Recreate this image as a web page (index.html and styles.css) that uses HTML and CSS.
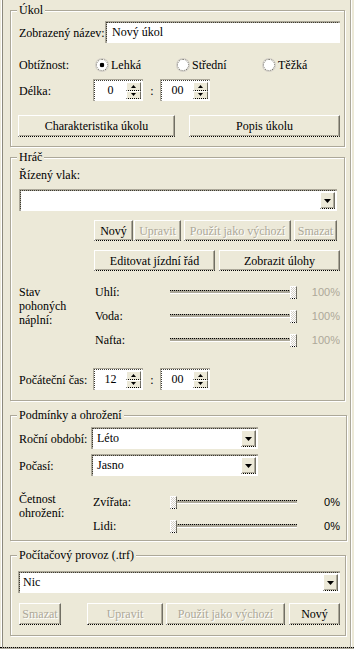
FILE: index.html
```html
<!DOCTYPE html>
<html lang="cs">
<head>
<meta charset="utf-8">
<title>Úkol</title>
<link rel="stylesheet" href="styles.css">
</head>
<body>
<div class="window">

  <section class="group g1">
    <div class="title"><span>Úkol</span></div>
    <div class="row r-name">
      <span class="lbl w87">Zobrazený název:</span>
      <div class="field name-field">Nový úkol</div>
    </div>
    <div class="row r-diff">
      <span class="lbl w77">Obtížnost:</span>
      <span class="radio-item ri1"><span class="radio checked"></span>Lehká</span>
      <span class="radio-item ri2"><span class="radio"></span>Střední</span>
      <span class="radio-item"><span class="radio"></span>Těžká</span>
    </div>
    <div class="row r-len">
      <span class="lbl w75">Délka:</span>
      <div class="spin"><span class="spin-val">0</span><span class="spin-btns"><span class="sb"><svg width="5" height="3" viewBox="0 0 5 3"><polygon points="2.5,0 5,3 0,3"/></svg></span><span class="sb"><svg width="5" height="3" viewBox="0 0 5 3"><polygon points="0,0 5,0 2.5,3"/></svg></span></span></div>
      <span class="colon">:</span>
      <div class="spin"><span class="spin-val">00</span><span class="spin-btns"><span class="sb"><svg width="5" height="3" viewBox="0 0 5 3"><polygon points="2.5,0 5,3 0,3"/></svg></span><span class="sb"><svg width="5" height="3" viewBox="0 0 5 3"><polygon points="0,0 5,0 2.5,3"/></svg></span></span></div>
    </div>
    <div class="row r-btns1">
      <button class="btn b-char">Charakteristika úkolu</button>
      <button class="btn b-popis">Popis úkolu</button>
    </div>
  </section>

  <section class="group g2">
    <div class="title"><span>Hráč</span></div>
    <div class="lbl r-train">Řízený vlak:</div>
    <div class="field combo combo-train"><span class="combo-text"></span><span class="combo-btn"><svg width="7" height="4" viewBox="0 0 7 4"><polygon points="0,0 7,0 3.5,4"/></svg></span></div>
    <div class="row r-tbtn1">
      <button class="btn b-new">Nový</button>
      <button class="btn b-edit" disabled>Upravit</button>
      <button class="btn b-def" disabled>Použít jako výchozí</button>
      <button class="btn b-del" disabled>Smazat</button>
    </div>
    <div class="row r-tbtn2">
      <button class="btn b-sched">Editovat jízdní řád</button>
      <button class="btn b-tasks">Zobrazit úlohy</button>
    </div>
    <div class="fuel">
      <div class="side-lbl fuel-lbl">Stav<br>pohoných<br>náplní:</div>
      <span class="lbl">Uhlí:</span>
      <div class="track full"><span class="thumb"></span></div>
      <span class="pct off">100%</span>
      <span class="lbl">Voda:</span>
      <div class="track full"><span class="thumb"></span></div>
      <span class="pct off">100%</span>
      <span class="lbl">Nafta:</span>
      <div class="track full"><span class="thumb"></span></div>
      <span class="pct off">100%</span>
    </div>
    <div class="row r-start">
      <span class="lbl w75">Počáteční čas:</span>
      <div class="spin"><span class="spin-val">12</span><span class="spin-btns"><span class="sb"><svg width="5" height="3" viewBox="0 0 5 3"><polygon points="2.5,0 5,3 0,3"/></svg></span><span class="sb"><svg width="5" height="3" viewBox="0 0 5 3"><polygon points="0,0 5,0 2.5,3"/></svg></span></span></div>
      <span class="colon">:</span>
      <div class="spin"><span class="spin-val">00</span><span class="spin-btns"><span class="sb"><svg width="5" height="3" viewBox="0 0 5 3"><polygon points="2.5,0 5,3 0,3"/></svg></span><span class="sb"><svg width="5" height="3" viewBox="0 0 5 3"><polygon points="0,0 5,0 2.5,3"/></svg></span></span></div>
    </div>
  </section>

  <section class="group g3">
    <div class="title"><span>Podmínky a ohrožení</span></div>
    <div class="row r-season">
      <span class="lbl w73">Roční období:</span>
      <div class="field combo combo-small"><span class="combo-text">Léto</span><span class="combo-btn"><svg width="7" height="4" viewBox="0 0 7 4"><polygon points="0,0 7,0 3.5,4"/></svg></span></div>
    </div>
    <div class="row r-weather">
      <span class="lbl w73">Počasí:</span>
      <div class="field combo combo-small"><span class="combo-text">Jasno</span><span class="combo-btn"><svg width="7" height="4" viewBox="0 0 7 4"><polygon points="0,0 7,0 3.5,4"/></svg></span></div>
    </div>
    <div class="threat">
      <div class="side-lbl threat-lbl">Četnost<br>ohrožení:</div>
      <span class="lbl">Zvířata:</span>
      <div class="track"><span class="thumb"></span></div>
      <span class="pct">0%</span>
      <span class="lbl">Lidi:</span>
      <div class="track"><span class="thumb"></span></div>
      <span class="pct">0%</span>
    </div>
  </section>

  <section class="group g4">
    <div class="title"><span>Počítačový provoz (.trf)</span></div>
    <div class="field combo combo-ai"><span class="combo-text">Nic</span><span class="combo-btn"><svg width="7" height="4" viewBox="0 0 7 4"><polygon points="0,0 7,0 3.5,4"/></svg></span></div>
    <div class="row r-aibtn">
      <button class="btn a-del" disabled>Smazat</button>
      <button class="btn a-edit" disabled>Upravit</button>
      <button class="btn a-def" disabled>Použít jako výchozí</button>
      <button class="btn a-new">Nový</button>
    </div>
  </section>

  <div class="bottom-line"></div>
</div>
</body>
</html>
```

FILE: styles.css
```css
* { box-sizing: border-box; }

body {
  margin: 0;
  background: #ECE9D8;
  font: 12px/14px "Liberation Serif", "Times New Roman", serif;
  color: #000;
}

.window {
  width: 354px;
  height: 649px;
  overflow: hidden;
  display: flex;
  flex-direction: column;
  background: #ECE9D8;
  box-shadow:
    inset 1px 0 #ECE9D8,
    inset 2px 0 #fff,
    inset 3px 0 #8C897C,
    inset -2px 0 #ECE9D8,
    inset -3px 0 #fff,
    inset -4px 0 #ACA899;
}

/* group box */
.group {
  margin: 0 9px 0 10px;
  border: 1px solid #ACA899;
  box-shadow: inset 1px 1px #fff, 1px 1px #fff;
  padding: 0 4px 0 8px;
  flex: none;
}
.title {
  height: 14px;
  margin-top: -8px;
  white-space: nowrap;
}
.title span {
  display: inline-block;
  background: #ECE9D8;
  padding: 0 2px;
  margin-left: -2px;
}

.g1 { margin-top: 10px; padding-bottom: 9px; }
.g2 { margin-top: 10px; padding-bottom: 10px; }
.g3 { margin-top: 14px; padding-bottom: 2px; margin-right: 7px; }
.g4 { margin-top: 14px; padding-bottom: 10px; margin-right: 8px; }

.row { display: flex; align-items: center; }
.lbl { white-space: nowrap; flex: none; }
.w87 { width: 87px; }
.w77 { width: 77px; }
.w75 { width: 75px; }
.w73 { width: 73px; }

/* sunken fields */
.field {
  background: #fff;
  background-clip: padding-box;
  border-top: 1px dotted #3C3A32;
  border-left: 1px dotted #3C3A32;
  border-right: 1px solid #fff;
  border-bottom: 1px solid #fff;
  box-shadow: 0 -1px 0 #ACA899, -1px 0 0 #ACA899, -1px -1px 0 #ACA899;
}

.r-name { margin-top: 5px; height: 21px; }
.name-field {
  width: 234px;
  height: 21px;
  padding-left: 5px;
  line-height: 19px;
}

/* radios */
.r-diff { margin-top: 14px; height: 16px; }
.radio-item { display: flex; align-items: center; flex: none; white-space: nowrap; }
.ri1 { width: 81px; }
.ri2 { width: 86px; }
.radio {
  width: 12px;
  height: 12px;
  margin-right: 3px;
  border-radius: 50%;
  background: #fff;
  border: 1px dotted #716F64;
  box-shadow: 0 0 0 1px #D4D0C8;
  flex: none;
}
.radio.checked {
  background: radial-gradient(circle, #000 0 2px, #fff 2.6px);
}

/* spin */
.r-len { margin-top: 7px; height: 21px; }
.spin {
  display: flex;
  width: 49px;
  height: 21px;
  background: #fff;
  border-top: 1px dotted #3C3A32;
  border-left: 1px dotted #3C3A32;
  border-right: 1px solid #fff;
  border-bottom: 1px solid #fff;
  box-shadow: 0 -1px 0 #ACA899, -1px 0 0 #ACA899, -1px -1px 0 #ACA899;
  flex: none;
}
.spin-val {
  flex: 1;
  text-align: center;
  line-height: 19px;
}
.spin-btns {
  width: 15px;
  display: flex;
  flex-direction: column;
  flex: none;
  margin: 1px 1px 1px 0;
}
.sb {
  flex: 1;
  background: #ECE9D8;
  border-top: 1px solid #fff;
  border-left: 1px solid #fff;
  border-right: 1px solid #716F64;
  border-bottom: 1px dotted #000;
  display: flex;
  align-items: center;
  justify-content: center;
}
.sb svg { display: block; fill: #000; }
.colon {
  width: 18px;
  text-align: center;
  flex: none;
}

/* buttons */
.btn {
  font: inherit;
  color: #000;
  background: #ECE9D8;
  padding: 0;
  margin: 0;
  border-top: 1px solid #fff;
  border-left: 1px solid #fff;
  border-right: 1px solid #716F64;
  border-bottom: 1px dotted #000;
  box-shadow: inset -1px -1px #ACA899;
  white-space: nowrap;
  flex: none;
  height: 21px;
  line-height: 18px;
}
.btn:disabled {
  color: #ACA899;
  text-shadow: 1px 1px #fff;
}

.r-btns1 { margin-top: 14px; }
.r-btns1 .btn { height: 22px; }
.b-char { width: 157px; margin-left: -1px; }
.b-popis { width: 151px; margin-left: 14px; }

/* player */
.r-train { margin-top: 4px; height: 14px; }
.combo {
  display: flex;
  align-items: center;
  height: 21px;
}
.combo-text { flex: 1; padding-left: 4px; line-height: 19px; white-space: nowrap; }
.combo-btn {
  width: 15px;
  height: 17px;
  margin-right: 1px;
  flex: none;
  background: #ECE9D8;
  border-top: 1px solid #fff;
  border-left: 1px solid #fff;
  border-right: 1px solid #716F64;
  border-bottom: 1px dotted #000;
  box-shadow: inset -1px -1px #ACA899;
  display: flex;
  align-items: center;
  justify-content: center;
}
.combo-btn svg { display: block; fill: #000; }
.combo-train { margin-top: 8px; margin-left: 1px; width: 317px; }

.r-tbtn1 { margin-top: 9px; padding-left: 75px; }
.b-new { width: 39px; }
.b-edit { width: 47px; margin-left: 1px; }
.b-def { width: 107px; margin-left: 3px; }
.b-del { width: 43px; margin-left: 3px; }

.r-tbtn2 { margin-top: 9px; padding-left: 75px; }
.b-sched { width: 121px; }
.b-tasks { width: 121px; margin-left: 4px; }

/* sliders */
.fuel, .threat {
  display: grid;
  align-items: center;
}
.fuel {
  margin-top: 9px;
  grid-template-columns: 76px 75px 127px 1fr;
  grid-template-rows: repeat(3, 24px);
}
.threat {
  margin-top: 14px;
  grid-template-columns: 74px 77px 127px 1fr;
  grid-template-rows: repeat(2, 24px);
  margin-right: 2px;
}
.side-lbl {
  grid-row: 1 / -1;
  grid-column: 1;
  align-self: start;
  white-space: nowrap;
}
.fuel-lbl { padding-top: 5px; }
.threat-lbl { padding-top: 2px; }

.track {
  height: 4px;
  border-top: 1px dotted #000;
  background: #ACA899;
  box-shadow: inset 0 -1px #fff;
  display: flex;
  align-items: center;
}
.track.full { justify-content: flex-end; }
.thumb {
  width: 7px;
  height: 13px;
  flex: none;
  background: repeating-conic-gradient(#fff 0 25%, #D4D0C8 0 50%) 0 0 / 2px 2px;
  border-top: 1px solid #fff;
  border-left: 1px solid #fff;
  border-right: 1px solid #716F64;
  border-bottom: 1px dotted #000;
}
.pct {
  font: 11px/14px "Liberation Sans", Arial, sans-serif;
  text-align: right;
}
.pct.off { color: #ACA899; }

.r-start { margin-top: 17px; height: 21px; }

/* conditions */
.r-season { margin-top: 6px; height: 21px; }
.r-weather { margin-top: 6px; height: 21px; }
.combo-small { width: 166px; }

/* AI */
.combo-ai { margin-top: 10px; width: 321px; }
.combo-ai .combo-text { padding-left: 3px; }
.r-aibtn { margin-top: 10px; }
.r-aibtn .btn { height: 22px; }
.a-del { width: 42px; }
.a-edit { width: 76px; margin-left: 26px; }
.a-def { width: 119px; margin-left: 3px; }
.a-new { width: 51px; margin-left: 4px; }

.bottom-line {
  margin-top: 11px;
  flex: none;
  height: 2px;
  border-top: 1px dotted #000;
  background: #ACA899;
}
```
